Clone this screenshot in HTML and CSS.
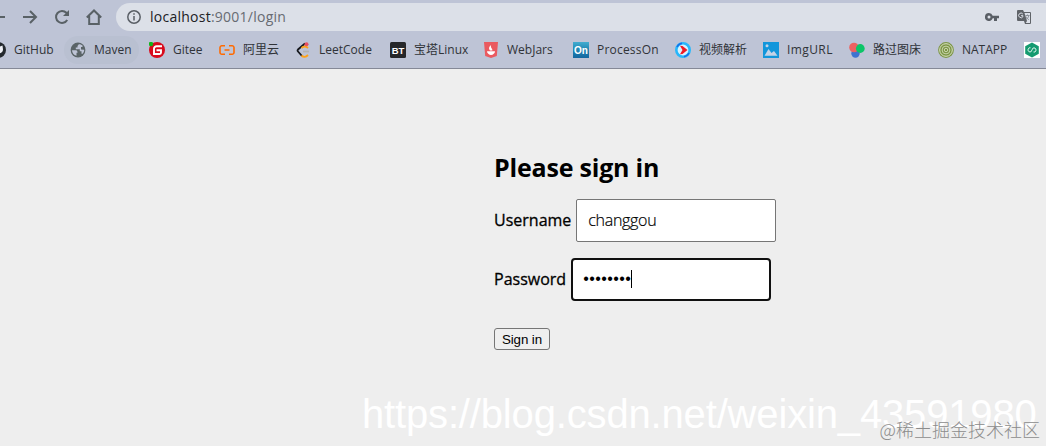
FILE: index.html
```html
<!DOCTYPE html>
<html lang="en">
<head>
  <meta charset="UTF-8">
  <title>Please sign in</title>
  <link rel="stylesheet" href="styles.css">
</head>
<body>
  <header class="browser">
    <div class="toolbar">
      <svg class="nav back" viewBox="0 0 16 16"><path d="M15 8H2M8 2L2 8l6 6"/></svg>
      <svg class="nav forward" viewBox="0 0 16 16"><path d="M1 8h13M8 2l6 6-6 6"/></svg>
      <svg class="nav reload" viewBox="0 0 16 16"><path d="M13.2 11A6 6 0 1 1 12.4 3.8L14 5.5"/><path class="solid" d="M15 1v6H9z"/></svg>
      <svg class="nav home" viewBox="0 0 16 16"><path d="M.8 8.5L8 1.5l7.200 7M3.200 7v8h9.600V7"/></svg>
      <div class="address">
        <svg class="info" viewBox="0 0 14 14"><circle cx="7" cy="7" r="6.200"/><path d="M7 6v4.500M7 3.300v1.500"/></svg>
        <span class="url">localhost<span class="path">:9001/login</span></span>
        <svg class="key" viewBox="0 0 14 8"><path fill-rule="evenodd" d="M4 0a4 4 0 1 0 3.700 5.300H9V8h3V5.300h2V2.700H7.700A4 4 0 0 0 4 0zm0 2.500a1.500 1.500 0 1 1 0 3 1.500 1.500 0 0 1 0-3z"/></svg>
        <svg class="translate" viewBox="0 0 14 14">
          <path d="M1 0h5l1 2h6a1 1 0 0 1 1 1v10a1 1 0 0 1-1 1H8l-1-3H1a1 1 0 0 1-1-1V1a1 1 0 0 1 1-1z" fill="#5f6368"/>
          <path d="M7.500 3H13v10H8.800l1.200-2z" fill="#dce0e8"/>
          <path d="M8.500 5.500h4M10.500 4.500v1M11.800 5.500C11.500 7.500 10 9 9 9.500M9 6.500c.5 1.500 2 2.800 3 3.200" fill="none" stroke="#8b9097"/>
          <path d="M5.800 4A2.300 2.300 0 1 0 6 6.500V5.700H4" fill="none" stroke="#dce0e8"/>
        </svg>
      </div>
    </div>
    <nav class="bookmarks">
      <a class="bookmark github">
        <svg viewBox="0 0 16 16"><circle cx="8" cy="8" r="8" fill="#24292e"/><path d="M3.500 3.500l2.500 1h4l2.500-1 .5 4c0 2-1.500 3.500-3 3.800V15H6v-3.700c-1.500-.3-3-1.800-3-3.800z" fill="#eef0f5"/></svg>
        <span>GitHub</span>
      </a>
      <a class="bookmark maven">
        <svg viewBox="0 0 16 16"><circle cx="8" cy="8" r="7.400" fill="#5a6467"/><path d="M8.800 2.200L7.500 4v1.500H5.800v1.700h4v2h1.700v2.500h1.200c1-1.200 1.500-2.500 1.500-4L11 7.500V5h1.500V3.500C11.500 2.600 10 2.200 8.800 2.200zM2 8.200h4.500l1 1.600v1h-1v3C3.800 13 2 10.800 2 8.200z" fill="#bec4d6"/></svg>
        <span>Maven</span>
      </a>
      <a class="bookmark gitee">
        <svg viewBox="0 0 16 16"><circle cx="8" cy="8" r="8" fill="#d90a1c"/><path d="M13 4.300H7.500A2.500 2.500 0 0 0 5 6.800V12h5.500a1.500 1.500 0 0 0 1.500-1.500V8.300H7.500" fill="none" stroke="#fff" stroke-width="1.900"/><circle cx="2" cy="2" r="2.200" fill="#12b51c"/></svg>
        <span>Gitee</span>
      </a>
      <a class="bookmark aliyun">
        <svg viewBox="0 0 16 16"><path d="M6 3.800H3A1.800 1.800 0 0 0 1 5.600v4.800a1.800 1.800 0 0 0 2 1.800h3M10 3.800h3a1.800 1.800 0 0 1 2 1.800v4.800a1.800 1.800 0 0 1-2 1.800h-3M5.500 8h5" fill="none" stroke="#ff6a00" stroke-width="1.600"/></svg>
        <span>阿里云</span>
      </a>
      <a class="bookmark leetcode">
        <svg viewBox="0 0 16 16"><g fill="none" stroke-width="1.800"><path d="M9 1.500L2 7.500a1.500 1.500 0 0 0 0 2L6 14" stroke="#15171c"/><path d="M5.500 13.500c2 2 4.500 1.500 6.500-.5M5.500 6c2-2 4.500-2 6.500 0" stroke="#ffa116"/><path d="M7 9.500h6" stroke="#b3b3b3"/></g><circle cx="10.500" cy="2.200" r="2" fill="#e9505f"/></svg>
        <span>LeetCode</span>
      </a>
      <a class="bookmark baota">
        <svg viewBox="0 0 16 16"><rect width="16" height="16" rx="1.500" fill="#26272a"/><text x="8" y="11.700" class="bt">BT</text></svg>
        <span>宝塔Linux</span>
      </a>
      <a class="bookmark webjars">
        <svg viewBox="0 0 16 16"><path d="M1 0h14l-1.200 14L8 16l-5.800-2z" fill="#ea5a60"/><path d="M4 9.200h8c0 2-2 3.700-4 3.700s-4-1.700-4-3.700z" fill="#fff"/><path d="M8 3C5.500 5 5.500 7 7 8.500h2.300C10 7 7.300 6 8 3z" fill="#fff"/></svg>
        <span>WebJars</span>
      </a>
      <a class="bookmark processon">
        <svg viewBox="0 0 16 16"><defs><linearGradient id="on" x2="0" y2="1"><stop stop-color="#43add0"/><stop offset=".45" stop-color="#2188b5"/><stop offset="1" stop-color="#1467a0"/></linearGradient></defs><rect width="16" height="16" fill="url(#on)"/><text x="8" y="11.800" class="on">On</text></svg>
        <span>ProcessOn</span>
      </a>
      <a class="bookmark video">
        <svg viewBox="0 0 16 16"><circle cx="8" cy="8" r="6.700" fill="#d8f2ff" stroke="#27b7fb" stroke-width="2.600"/><path d="M2 5A6.700 6.700 0 0 1 7 1.300M14 11a6.700 6.700 0 0 1-5 3.700" fill="none" stroke="#176de9" stroke-width="1.400"/><path d="M5 3.800L7.500 4l5 4-5 4-2.500.2L7.500 8z" fill="#f01a24"/></svg>
        <span>视频解析</span>
      </a>
      <a class="bookmark imgurl">
        <svg viewBox="0 0 16 16"><path d="M0 0h16v16H0z" fill="#1296db"/><path d="M1.500 13.800L5.500 7l3 4L11 9l3.500 4.800z" fill="#c4d3e6"/><circle cx="4" cy="3.700" r="1.500" fill="#c4d3e6"/></svg>
        <span>ImgURL</span>
      </a>
      <a class="bookmark luguo">
        <svg viewBox="0 0 16 16"><circle cx="6.500" cy="11.500" r="4.200" fill="#3e74d0"/><circle cx="5" cy="5.500" r="4.800" fill="#ee6260"/><circle cx="11.300" cy="6.500" r="4.400" fill="#0cc568"/></svg>
        <span>路过图床</span>
      </a>
      <a class="bookmark natapp">
        <svg viewBox="0 0 16 16"><circle cx="8" cy="8" r="7.900" fill="#7c9647"/><g fill="none" stroke="#dce3c5"><circle cx="8" cy="8" r="6.300"/><circle cx="8" cy="8" r="3.900" stroke-width=".8"/><circle cx="8" cy="8" r="1.700" stroke-width=".8"/></g></svg>
        <span>NATAPP</span>
      </a>
      <a class="bookmark last">
        <svg viewBox="0 0 16 16"><path d="M0 0h16v16H0z" fill="#fff"/><path d="M8 .5l6.800 3.700v7.600L8 15.500l-6.800-3.700V4.200z" fill="#159b70"/><path d="M6.500 5.800H5L3.800 8 5 9.800h2L9 6h2l1.200 2L11 10H9.500" fill="none" stroke="#d6f0e6"/></svg>
      </a>
    </nav>
  </header>

  <main class="container">
    <form class="form-signin">
      <h2>Please sign in</h2>
      <p>
        <label for="username">Username</label>
        <input type="text" id="username" value="changgou">
      </p>
      <p>
        <label>Password</label>
        <span class="password">••••••••<i class="caret"></i></span>
      </p>
      <button type="button">Sign in</button>
    </form>
  </main>

  <div class="watermark">https://blog.csdn.net/weixin_43591980</div>
  <div class="community">@稀土掘金技术社区</div>
</body>
</html>
```

FILE: styles.css
```css
* {
  box-sizing: border-box;
}
body {
  margin: 0;
  height: 446px;
  overflow: hidden;
  position: relative;
  background: #eee;
  color: #000;
  font-family: "Open Sans", "Noto Sans CJK SC", sans-serif;
}
svg {
  display: block;
  flex: none;
}

/* browser chrome */
.browser {
  height: 69px;
  padding-top: 3px;
  background: #bec4d6;
  border-bottom: 1px solid #858997;
  overflow: hidden;
}
.toolbar {
  display: flex;
  align-items: center;
  height: 28px;
}
.nav {
  width: 16px;
  height: 16px;
  margin-right: 16px;
  fill: none;
  stroke: #596166;
  stroke-width: 2;
}
.nav .solid {
  fill: #596166;
  stroke: none;
}
.back {
  margin-left: -10px;
}
.home {
  margin-right: 14px;
}
.address {
  display: flex;
  align-items: center;
  flex: 1;
  height: 28px;
  padding: 0 15px 0 11px;
  background: #dce0e8;
  border-radius: 14px 0 0 14px;
}
.info {
  width: 14px;
  height: 14px;
  fill: none;
  stroke: #5a5f66;
  stroke-width: 1.5;
}
.url {
  margin-left: 9px;
  font-size: 14px;
  line-height: 20px;
  letter-spacing: 0.25px;
  color: #202124;
}
.path {
  color: #676b72;
}
.key {
  width: 14px;
  height: 8px;
  margin-left: auto;
  fill: #5a5f66;
}
.translate {
  width: 14px;
  height: 14px;
  margin: 0 0 0 18px;
}
.bookmarks {
  display: flex;
  align-items: center;
  height: 37px;
  margin-left: -10px;
}
.bookmark {
  display: flex;
  align-items: center;
  flex: none;
  height: 28px;
  color: #303338;
  font-size: 12px;
  line-height: 16px;
  white-space: nowrap;
}
.bookmark svg {
  width: 16px;
  height: 16px;
  margin-right: 8px;
}
.github { width: 74px; }
.maven {
  width: 75px;
  margin-right: 10px;
  padding-left: 6px;
  background: #b9c0d1;
  border-radius: 14px;
}
.gitee { width: 70px; }
.aliyun { width: 77px; }
.leetcode { width: 94px; }
.leetcode svg { margin-right: 7px; }
.baota { width: 93px; }
.webjars { width: 90px; }
.processon { width: 102px; }
.processon span { letter-spacing: 0.2px; }
.video { width: 88px; }
.imgurl { width: 86px; }
.imgurl span { letter-spacing: 0.4px; }
.luguo { width: 89px; }
.natapp { width: 86px; }
.bt,
.on {
  font: bold 9.5px "Liberation Sans", sans-serif;
  fill: #fff;
  text-anchor: middle;
}
.on {
  font-size: 10px;
}

/* login form */
.container {
  padding: 79px 0 0 494px;
}
.form-signin {
  width: 300px;
}
.form-signin h2 {
  margin: 0 0 13px;
  font-size: 25px;
  line-height: 38px;
  letter-spacing: -0.2px;
}
.form-signin p {
  display: flex;
  align-items: center;
  height: 43px;
  margin: 0 0 16px;
}
.form-signin label {
  padding-bottom: 2px;
  font-size: 16px;
  -webkit-text-stroke: 0.3px #000;
}
#username {
  width: 200px;
  height: 43px;
  margin-left: 5px;
  padding: 0 11px 2px;
  border: 1px solid #767676;
  border-radius: 2px;
  background: #fff;
  color: #000;
  font: 300 16px "Open Sans", sans-serif;
  letter-spacing: -0.3px;
  -webkit-text-stroke: 0.2px #000;
}
.password {
  display: flex;
  align-items: center;
  width: 200px;
  height: 43px;
  margin-left: 5px;
  padding: 0 0 2px 10px;
  border: 2px solid #101010;
  border-radius: 4px;
  background: #fff;
  font: 16px "Liberation Sans", sans-serif;
  letter-spacing: 0.4px;
}
.caret {
  width: 1px;
  height: 18px;
  background: #000;
}
.form-signin button {
  display: block;
  width: 56px;
  height: 22px;
  margin-top: 27px;
  padding: 0;
  border: 1px solid #767676;
  border-radius: 3px;
  background: #efefef;
  color: #000;
  font: 13.33px "Liberation Sans", sans-serif;
  letter-spacing: -0.1px;
}

/* overlaid marks */
.watermark {
  position: absolute;
  top: 390px;
  left: 362px;
  color: #fff;
  font: 40px/48px "Liberation Sans", sans-serif;
  letter-spacing: -0.16px;
  white-space: nowrap;
}
.community {
  position: absolute;
  right: 6px;
  bottom: 4px;
  color: #8c8c8c;
  font: 300 18px/26px "Noto Sans CJK SC", sans-serif;
  white-space: nowrap;
}
```
